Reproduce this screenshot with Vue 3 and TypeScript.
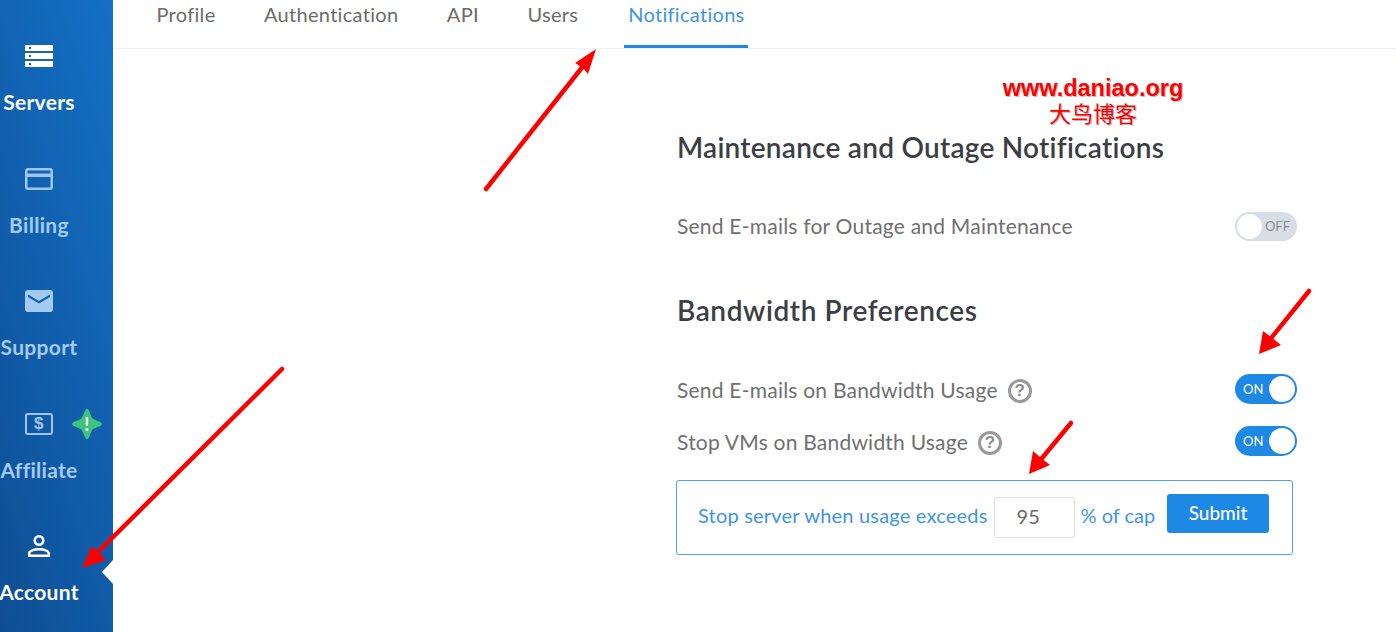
<script setup lang="ts">
const tabs = ['Profile', 'Authentication', 'API', 'Users', 'Notifications']
const arrows = [
  { d: 'M486 189 L584 65', head: '596,49 575,63 583,68 588,74' },
  { d: 'M1309 291 L1268 342', head: '1259,354 1263,331 1271,337 1281,345' },
  { d: 'M1071 423 L1038 463', head: '1029,474 1033,451 1041,458 1050,465' },
  { d: 'M282 369 L98 552', head: '82,568 92,546 99,553 106,560' },
]
</script>

<template>
  <div class="page">
    <nav class="side">
      <a class="item active">
        <svg class="ic" viewBox="0 0 28 22"><path fill="#fff" fill-rule="evenodd" d="M0 0h28v6H0zM4 2v2h2V2zM0 8h28v6H0zM4 10v2h2v-2zM0 16h28v6H0zM4 18v2h2v-2z"/></svg>
        <span>Servers</span>
      </a>
      <a class="item">
        <svg class="ic" viewBox="0 0 28 22"><path fill="#9fc6ef" fill-rule="evenodd" d="M3 0h22a3 3 0 0 1 3 3v16a3 3 0 0 1-3 3H3a3 3 0 0 1-3-3V3a3 3 0 0 1 3-3zM2.500 3v2.500h23V3a.5.500 0 0 0-.5-.5H3a.5.500 0 0 0-.5.500zM2.500 9v10a.5.500 0 0 0 .5.500h22a.5.500 0 0 0 .5-.5V9z"/></svg>
        <span>Billing</span>
      </a>
      <a class="item">
        <svg class="ic" viewBox="0 0 28 22"><path fill="#a3cbf2" d="M3 0h22a3 3 0 0 1 3 3v16a3 3 0 0 1-3 3H3a3 3 0 0 1-3-3V3a3 3 0 0 1 3-3zm22 4.500L14 11 3 4.500V7l11 6.500L25 7z"/></svg>
        <span>Support</span>
      </a>
      <a class="item">
        <span class="money"><b>$</b></span>
        <span>Affiliate</span>
        <span class="star">
          <svg viewBox="0 0 30 30"><path fill="#3fc47b" d="M15 0C17.500 0 18 6 20.500 9.500 24 12 30 12.500 30 15 30 17.500 24 18 20.500 20.500 18 24 17.500 30 15 30 12.500 30 12 24 9.500 20.500 6 18 0 17.500 0 15 0 12.500 6 12 9.500 9.500 12 6 12.500 0 15 0Z"/></svg>
          <i>!</i>
        </span>
      </a>
      <a class="item active">
        <svg class="ic person" viewBox="0 0 22 22"><path fill="#fff" fill-rule="evenodd" d="M11 0a5.500 5.500 0 1 1 0 11 5.500 5.500 0 0 1 0-11zm0 2.500a3 3 0 1 0 0 6 3 3 0 0 0 0-6zM11 13c5 0 11 2 11 5v4H0v-4c0-3 6-5 11-5zm0 2.500c-4 0-8.500 1.400-8.500 2.500v1.500h17V18c0-1.100-4.500-2.500-8.500-2.500z"/></svg>
        <span>Account</span>
        <em class="pointer"></em>
      </a>
    </nav>

    <main class="main">
      <div class="tabs">
        <a v-for="t in tabs" :key="t" class="tab" :class="{ on: t === 'Notifications' }">{{ t }}</a>
      </div>

      <section class="content">
        <h2>Maintenance and Outage Notifications</h2>
        <div class="row first">
          <span class="t0">Send E-mails for Outage and Maintenance</span>
          <span class="toggle off"><i></i><small>OFF</small></span>
        </div>

        <h2 class="second">Bandwidth Preferences</h2>
        <div class="row r1">
          <span class="lab"><span>Send E-mails on Bandwidth Usage</span><b class="q">?</b></span>
          <span class="toggle"><small>ON</small><i></i></span>
        </div>
        <div class="row r2">
          <span class="lab"><span>Stop VMs on Bandwidth Usage</span><b class="q">?</b></span>
          <span class="toggle"><small>ON</small><i></i></span>
        </div>

        <div class="box">
          <span class="bt">Stop server when usage exceeds</span>
          <span class="input">95</span>
          <span class="bt cap">% of cap</span>
          <button class="submit">Submit</button>
        </div>
      </section>
    </main>

    <div class="mark">
      <div class="m1">www.daniao.org</div>
      <div class="m2">大鸟博客</div>
    </div>

    <svg class="arrows" width="1396" height="632" viewBox="0 0 1396 632">
      <g v-for="a in arrows" :key="a.d">
        <path :d="a.d" stroke="#ff0000" stroke-width="4.500" stroke-linecap="round" fill="none" />
        <polygon :points="a.head" fill="#ff0000" />
      </g>
    </svg>
  </div>
</template>

<style>
html, body { margin: 0; background: #fff; overflow: hidden; }
</style>

<style scoped>
.page {
  position: relative;
  display: flex;
  width: 1396px;
  height: 632px;
  overflow: hidden;
  font-family: Lato, "Noto Sans", sans-serif;
  color: #6a6a6a;
}
.side {
  width: 113px;
  flex: none;
  padding-top: 45px;
  box-sizing: border-box;
  background: linear-gradient(72deg, #0e4e94 0%, #1470c6 100%);
}
.item {
  position: relative;
  display: flex;
  flex-direction: column;
  align-items: center;
  width: 78px;
  height: 122.500px;
  color: #a3cbf2;
  font-size: 21px;
  font-weight: 700;
  line-height: 24px;
  letter-spacing: 0.3px;
  white-space: nowrap;
}
.item.active { color: #fff; }
.ic { width: 28px; height: 22px; margin-bottom: 23px; display: block; flex: none; }
.money {
  box-sizing: border-box;
  width: 28px;
  height: 22px;
  margin-bottom: 23px;
  border: 2px solid #9fc6ef;
  border-radius: 3px;
  display: flex;
  align-items: center;
  justify-content: center;
  flex: none;
}
.money b { font-size: 17px; line-height: 18px; color: #9fc6ef; font-family: "Liberation Sans", sans-serif; }
.star {
  position: absolute;
  left: 72px;
  top: -4px;
  width: 30px;
  height: 30px;
}
.star svg { width: 30px; height: 30px; display: block; }
.star i {
  position: absolute;
  inset: 0;
  text-align: center;
  line-height: 30px;
  color: #fff;
  font-style: normal;
  font-size: 18px;
}
.pointer {
  position: absolute;
  left: 102px;
  top: 25px;
  width: 0;
  height: 0;
  border-top: 12px solid transparent;
  border-bottom: 12px solid transparent;
  border-right: 11px solid #fff;
}
.main { flex: 1; min-width: 0; }
.tabs {
  display: flex;
  height: 49px;
  box-sizing: border-box;
  padding-left: 39.500px;
  gap: 40.500px;
  border-bottom: 1px solid #edf0f4;
}
.tab {
  box-sizing: border-box;
  height: 48px;
  padding: 0 4px;
  font-size: 20px;
  line-height: 28px;
  letter-spacing: 0.3px;
  color: #6b6b6b;
}
.tab.on { color: #3f93e8; border-bottom: 3px solid #1e88e5; padding: 0 3px 0 4px; margin-left: 1.500px; }
.content { padding: 80px 99px 0 564px; }
h2 {
  margin: 0;
  font-size: 28px;
  line-height: 36px;
  font-weight: 600;
  letter-spacing: 0.25px;
  color: #3b3f45;
}
h2.second { margin-top: 51px; letter-spacing: 0.6px; }
.row {
  display: flex;
  align-items: center;
  justify-content: space-between;
  height: 30px;
  font-size: 21px;
  letter-spacing: 0.22px;
  color: #707070;
}
.row.first { margin-top: 46px; }
.row.r1 { margin-top: 46px; }
.row.r2 { margin-top: 22px; }
.t0 { margin-top: -2px; }
.lab { display: flex; align-items: center; gap: 10px; }
.q {
  box-sizing: border-box;
  width: 24px;
  height: 24px;
  position: relative;
  top: 2px;
  border: 3px solid #999;
  border-radius: 50%;
  color: #8c8c8c;
  font-size: 17px;
  line-height: 18px;
  letter-spacing: 0;
  text-align: center;
  font-family: "Liberation Sans", sans-serif;
}
.toggle {
  box-sizing: border-box;
  width: 62px;
  height: 30px;
  border-radius: 15px;
  background: #1e88e5;
  padding: 2px;
  display: flex;
  align-items: center;
  justify-content: space-between;
  color: #fff;
  letter-spacing: 0;
}
.toggle small { font-size: 13px; padding: 0 0 0 6px; }
.toggle i { width: 26px; height: 26px; border-radius: 50%; background: #fff; }
.toggle.off { background: #d9dee6; color: #8c8c8c; height: 29px; }
.toggle.off i { width: 25px; height: 25px; }
.toggle.off small { padding: 0 5px 0 0; }
.box {
  box-sizing: border-box;
  width: 617px;
  height: 75px;
  margin: 24px 0 0 -1px;
  border: 1px solid #4aa3f5;
  border-radius: 3px;
  padding: 0 23px 0 21px;
  display: flex;
  align-items: center;
  font-size: 20px;
  letter-spacing: 0.2px;
  color: #3f93e8;
}
.bt { margin-top: -6px; }
.cap { letter-spacing: 0; }
.input {
  box-sizing: border-box;
  width: 81px;
  height: 41px;
  margin: 0 6px 0;
  padding-left: 22px;
  border: 1px solid #dedede;
  border-radius: 3px;
  line-height: 36px;
  color: #6a6a6a;
}
.submit {
  width: 102px;
  height: 39px;
  margin: -8px 0 0 auto;
  padding: 0 0 2px;
  border: 0;
  border-radius: 3px;
  background: #1e88e5;
  color: #fff;
  font: 500 19px Lato, sans-serif;
}
.mark {
  position: absolute;
  left: 993px;
  top: 75px;
  width: 200px;
  text-align: center;
  color: #ff0000;
  text-shadow: 1px 1px 0 #bbb, -1px 0 0 #fff, 0 -1px 0 #fff, 1px 0 0 #fff, 0 1px 0 #fff;
}
.m1 {
  font: 700 23.500px/26px "Liberation Sans", sans-serif;
}
.m2 {
  font: 400 22px/22px "Noto Sans CJK SC", sans-serif;
}
.arrows {
  position: absolute;
  left: 0;
  top: 0;
  pointer-events: none;
}
</style>
